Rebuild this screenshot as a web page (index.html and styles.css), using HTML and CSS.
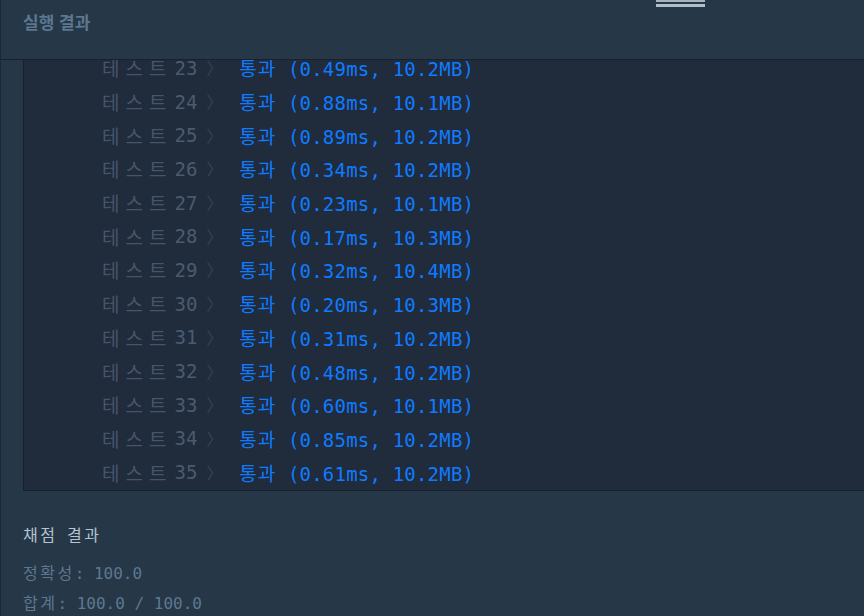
FILE: index.html
```html
<!DOCTYPE html>
<html lang="ko">
<head>
    <meta charset="UTF-8">
    <meta name="viewport" content="width=device-width, initial-scale=1.0">
    <title>실행 결과</title>
    <link rel="stylesheet" href="styles.css">
</head>
<body>

    <div class="page">
        <div class="handle"></div>

        <div class="header">실행 결과</div>

        <div class="output">
            <ul class="tests">
                <li><span class="label">테스트</span><span class="num">23</span><span class="arrow">〉</span><span class="pass"><span class="ko">통과</span> (0.49ms, 10.2MB)</span></li>
                <li><span class="label">테스트</span><span class="num">24</span><span class="arrow">〉</span><span class="pass"><span class="ko">통과</span> (0.88ms, 10.1MB)</span></li>
                <li><span class="label">테스트</span><span class="num">25</span><span class="arrow">〉</span><span class="pass"><span class="ko">통과</span> (0.89ms, 10.2MB)</span></li>
                <li><span class="label">테스트</span><span class="num">26</span><span class="arrow">〉</span><span class="pass"><span class="ko">통과</span> (0.34ms, 10.2MB)</span></li>
                <li><span class="label">테스트</span><span class="num">27</span><span class="arrow">〉</span><span class="pass"><span class="ko">통과</span> (0.23ms, 10.1MB)</span></li>
                <li><span class="label">테스트</span><span class="num">28</span><span class="arrow">〉</span><span class="pass"><span class="ko">통과</span> (0.17ms, 10.3MB)</span></li>
                <li><span class="label">테스트</span><span class="num">29</span><span class="arrow">〉</span><span class="pass"><span class="ko">통과</span> (0.32ms, 10.4MB)</span></li>
                <li><span class="label">테스트</span><span class="num">30</span><span class="arrow">〉</span><span class="pass"><span class="ko">통과</span> (0.20ms, 10.3MB)</span></li>
                <li><span class="label">테스트</span><span class="num">31</span><span class="arrow">〉</span><span class="pass"><span class="ko">통과</span> (0.31ms, 10.2MB)</span></li>
                <li><span class="label">테스트</span><span class="num">32</span><span class="arrow">〉</span><span class="pass"><span class="ko">통과</span> (0.48ms, 10.2MB)</span></li>
                <li><span class="label">테스트</span><span class="num">33</span><span class="arrow">〉</span><span class="pass"><span class="ko">통과</span> (0.60ms, 10.1MB)</span></li>
                <li><span class="label">테스트</span><span class="num">34</span><span class="arrow">〉</span><span class="pass"><span class="ko">통과</span> (0.85ms, 10.2MB)</span></li>
                <li><span class="label">테스트</span><span class="num">35</span><span class="arrow">〉</span><span class="pass"><span class="ko">통과</span> (0.61ms, 10.2MB)</span></li>
            </ul>
        </div>

        <!-- Score summary -->
        <div class="score">
            <div class="score-title"><span class="ko">채점</span> <span class="ko">결과</span></div>
            <div class="score-line"><span class="ko">정확성</span>: 100.0</div>
            <div class="score-line"><span class="ko">합계</span>: 100.0 / 100.0</div>
        </div>
    </div>

</body>
</html>
```

FILE: styles.css
```css
body {
    margin: 0;
    padding: 0;
    background-color: #263747;
    font-family: 'DejaVu Sans Mono', 'Noto Sans CJK KR', monospace;
    overflow: hidden;
}

.page {
    position: relative;
    height: 616px;
    border-left: 1px solid #1d2838;
}

/* resize handle at the top */
.handle {
    position: absolute;
    top: 0;
    left: 655px;
    width: 49px;
    height: 2px;
    background-color: #a7b4bd;
}

.handle::after {
    content: '';
    position: absolute;
    top: 4px;
    left: 0;
    width: 100%;
    height: 3px;
    background-color: #b0bec8;
}

.header {
    height: 60px;
    border-bottom: 1px solid #18222f;
    padding: 9px 0 0 22px;
    box-sizing: border-box;
    font-family: 'Noto Sans CJK KR', sans-serif;
    font-size: 17px;
    font-weight: bold;
    color: #5b7890;
}

.output {
    margin-left: 22px;
    height: 430px;
    background-color: #202b3c;
    border-left: 1px solid #18222f;
    border-bottom: 1px solid #18222f;
    overflow: hidden;
}

.tests {
    list-style: none;
    margin: -9px 0 0 0;
    padding: 0 0 0 80px;
    font-size: 19px;
}

.tests li {
    display: flex;
    align-items: center;
    height: 33.7px;
    white-space: pre;
}

.label {
    color: #46566a;
    letter-spacing: 6px;
    margin-left: -2px;
}

.num {
    color: #4b5b6e;
    margin-left: 2px;
}

.arrow {
    color: #334257;
    font-family: 'Noto Sans CJK KR', sans-serif;
    font-size: 17px;
    margin-left: 9px;
    width: 33px;
}

.pass {
    color: #0f7bff;
}

.pass .ko {
    letter-spacing: 1px;
}

.pass {
    letter-spacing: 0.2px;
}

.score {
    padding: 32px 0 0 22px;
    font-size: 16px;
}

.score .ko {
    letter-spacing: 2.5px;
}

.score-title {
    color: #b3c3d0;
    height: 36px;
    line-height: 26px;
}

.score-line {
    color: #5d7890;
    height: 30px;
    line-height: 30px;
}
```
